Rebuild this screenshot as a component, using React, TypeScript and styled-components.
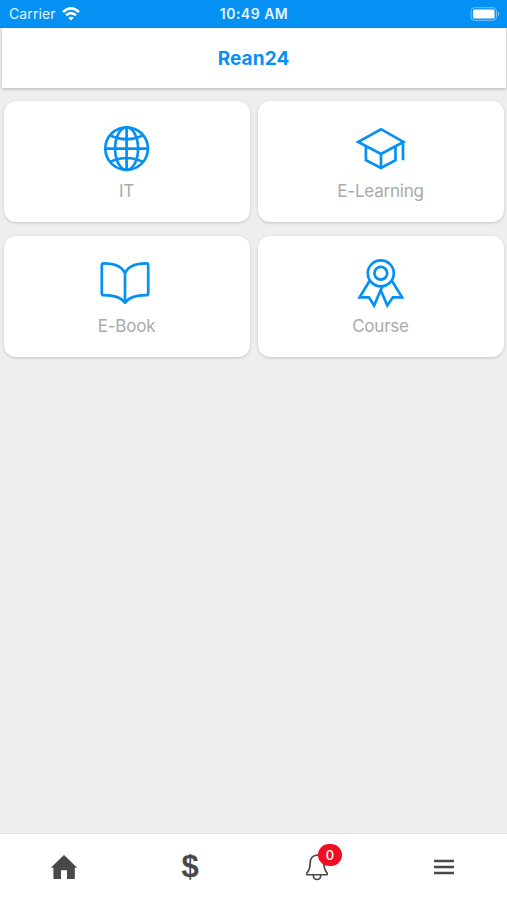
import React from "react";
import styled, { createGlobalStyle } from "styled-components";

const BLUE = "#0590f3";
const DARK = "#484848";

const GlobalStyle = createGlobalStyle`
  * { box-sizing: border-box; }
  body { margin: 0; background: #eee; font-family: Inter, "Liberation Sans", sans-serif; }
`;

const Screen = styled.div`
  display: flex;
  flex-direction: column;
  width: 100%;
  height: 100vh;
  background: #eee;
  overflow: hidden;
`;

const StatusBar = styled.div`
  display: grid;
  grid-template-columns: 1fr auto 1fr;
  align-items: center;
  height: 28px;
  flex: none;
  padding: 0 6px 1px 9px;
  background: ${BLUE};
  color: #e3f4ff;
`;

const Carrier = styled.div`
  display: flex;
  align-items: center;
  gap: 6px;
  font-size: 14px;
  line-height: 20px;
  letter-spacing: 0.1px;
`;

const Clock = styled.div`
  margin-right: 2px;
  font-size: 14px;
  line-height: 20px;
  font-weight: 600;
  letter-spacing: 0.5px;
`;

const BatteryIcon = styled.svg`
  justify-self: end;
  display: block;
`;

const Header = styled.header`
  display: flex;
  align-items: center;
  justify-content: center;
  height: 60px;
  flex: none;
  margin: 0 1px 0 2px;
  padding-top: 1px;
  background: #fff;
  box-shadow: 0 1px 3px rgba(0, 0, 0, 0.24);
`;

const Title = styled.h1`
  margin: 0 1px 0 0;
  font-size: 19px;
  line-height: 24px;
  font-weight: 700;
  letter-spacing: 0.1px;
  color: ${BLUE};
`;

const Grid = styled.main`
  flex: 1;
  display: grid;
  grid-template-columns: 1fr 1fr;
  grid-auto-rows: 121px;
  align-content: start;
  gap: 14px 8px;
  padding: 13px 3px 0 4px;
`;

const Card = styled.div`
  display: flex;
  flex-direction: column;
  align-items: center;
  padding-top: 23px;
  border-radius: 12px;
  background: #fff;
  box-shadow: 0 1px 3px rgba(0, 0, 0, 0.18);
`;

const CardIcon = styled.svg`
  display: block;
  overflow: visible;
  fill: none;
  stroke: ${BLUE};
  stroke-width: 2.7;
`;

const Label = styled.div`
  margin: 6px 1px 0 0;
  font-size: 17px;
  line-height: 22px;
  letter-spacing: -0.22px;
  color: #aaa;
`;

const TabBar = styled.nav`
  display: grid;
  grid-template-columns: repeat(4, 1fr);
  align-items: center;
  height: 67px;
  flex: none;
  border-top: 1px solid #e4e4e4;
  background: #fff;
  color: ${DARK};
`;

const Tab = styled.div`
  display: flex;
  align-items: center;
  justify-content: center;
`;

const HomeIcon = styled.svg`
  margin-left: 2px;
`;

const Dollar = styled.span`
  font: bold 31px/34px "Liberation Sans", sans-serif;
`;

const BellWrap = styled.div`
  position: relative;
  width: 24px;
  height: 28px;
`;

const Badge = styled.span`
  position: absolute;
  left: 13px;
  top: -9px;
  width: 24px;
  height: 22px;
  border-radius: 11px;
  background: #ee1022;
  color: #fff;
  font-size: 13px;
  font-weight: 500;
  line-height: 22px;
  text-align: center;
`;

const Globe = () => (
  <CardIcon width="56" height="50">
    <circle cx="27.6" cy="24.6" r="21.3" />
    <ellipse cx="27.6" cy="24.6" rx="11.5" ry="21.3" />
    <path d="M27.6 3.3v42.6M6.3 24.6h42.6M11 11.2q16.6 8 33.2 0M11 38q16.6-8 33.2 0" />
  </CardIcon>
);

const Cap = () => (
  <CardIcon width="56" height="50">
    <path d="M5.2 17.9 28 5.2l22.4 12.7L28 30ZM12.9 22.5v13.7L28 44l14.5-7.8V22.5M28 30v14M50 18v18.3" />
  </CardIcon>
);

const Book = () => (
  <CardIcon width="56" height="50" strokeLinejoin="round">
    <path d="M26 14.3C23 7.5 15 4.4 4.8 4.4Q2.8 4.4 2.8 6.4V34.4Q2.8 36.2 4.8 36.2C15 36.2 22 38 26 43.6C30 38 37 36.2 47.2 36.2Q49.2 36.2 49.2 34.4V6.4Q49.2 4.4 47.2 4.4C37 4.4 29 7.5 26 14.3ZM26 14.3V43" />
  </CardIcon>
);

const Ribbon = () => (
  <CardIcon width="56" height="50">
    <circle cx="27.8" cy="14.3" r="13" />
    <circle cx="27.8" cy="14.3" r="6.4" />
    <path d="M16.5 22 6.6 38.3h9.3l5.2 8.2 8.2-19.2M39 22l10.1 16.3h-9.3l-5.5 8.2-6.4-15" />
  </CardIcon>
);

const categories = [
  { label: "IT", icon: <Globe /> },
  { label: "E-Learning", icon: <Cap /> },
  { label: "E-Book", icon: <Book /> },
  { label: "Course", icon: <Ribbon /> },
];

export default function App() {
  return (
    <Screen>
      <GlobalStyle />
      <StatusBar>
        <Carrier>
          Carrier
          <svg width="18" height="14" viewBox="0 0 18 14" fill="none" stroke="#fff" strokeWidth="2.5">
            <path d="M1 5.1Q9-2.3 17 5.1M4 8.3Q9 3.9 14 8.3" />
            <path d="M6.3 10.8Q9 8.6 11.7 10.8L9 13.6Z" fill="#fff" stroke="none" />
          </svg>
        </Carrier>
        <Clock>10:49 AM</Clock>
        <BatteryIcon width="31" height="14" viewBox="0 0 31 14">
          <rect x="1" y="0.7" width="25.5" height="12.6" rx="3.5" fill="none" stroke="#79c5fa" />
          <rect x="3" y="2.6" width="21.6" height="8.8" rx="1.5" fill="#fff" />
          <path d="M28 4.5q2.5 2.5 0 5Z" fill="#79c5fa" />
        </BatteryIcon>
      </StatusBar>
      <Header>
        <Title>Rean24</Title>
      </Header>
      <Grid>
        {categories.map((c) => (
          <Card key={c.label}>
            {c.icon}
            <Label>{c.label}</Label>
          </Card>
        ))}
      </Grid>
      <TabBar>
        <Tab>
          <HomeIcon width="28" height="26" viewBox="0 0 28 26" fill={DARK}>
            <path d="M14 1 27.2 13.8H24.8V24.2Q24.8 25 24 25H17V16.2H11V25H4.2Q3.4 25 3.4 24.2V13.8H.8Z" />
          </HomeIcon>
        </Tab>
        <Tab>
          <Dollar>$</Dollar>
        </Tab>
        <Tab>
          <BellWrap>
            <svg width="24" height="28" viewBox="0 0 24 28" fill="none" stroke={DARK} strokeWidth="1.6" strokeLinejoin="round">
              <path d="M12 2C7.5 2.6 5.2 6 5.2 10C5.2 16.5 3.4 17.8 1.8 20.2Q1.3 21.8 2.6 21.8H21.4Q22.7 21.8 22.2 20.2C20.6 17.8 18.8 16.5 18.8 10C18.8 6 16.5 2.6 12 2ZM8.3 22.5Q8.5 26.5 12 26.5T15.7 22.5" />
            </svg>
            <Badge>0</Badge>
          </BellWrap>
        </Tab>
        <Tab>
          <svg width="20" height="16" viewBox="0 0 20 16" stroke={DARK} strokeWidth="2.6">
            <path d="M0 2h20M0 8h20M0 14h20" />
          </svg>
        </Tab>
      </TabBar>
    </Screen>
  );
}
